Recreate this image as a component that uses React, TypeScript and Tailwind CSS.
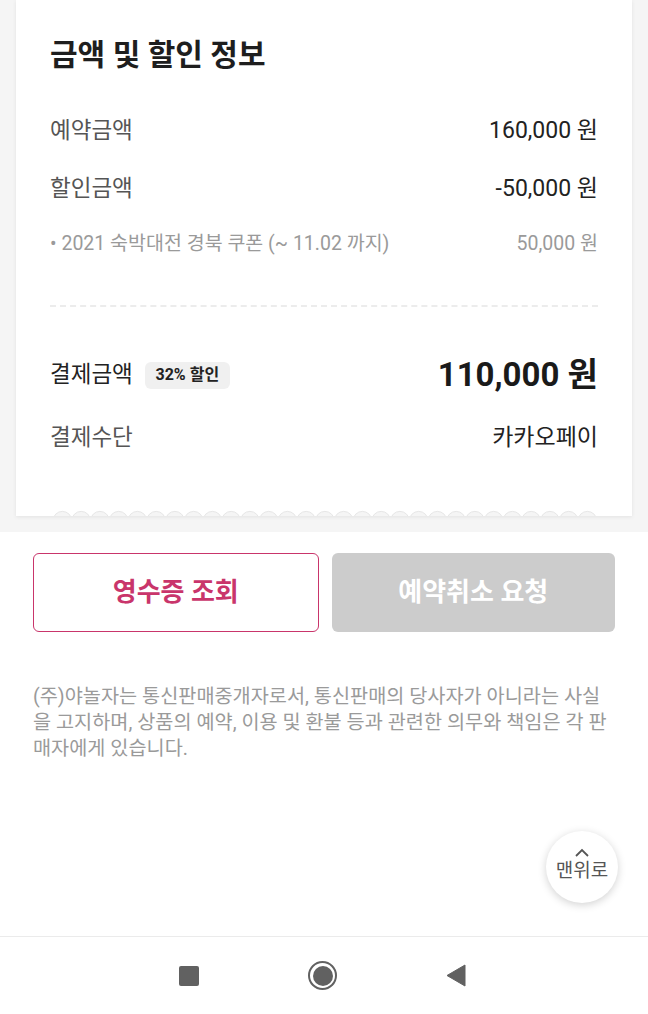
import { ReactNode } from "react";

const PINK = "#c9356b";

const Row = ({ label, value, h, labelClass, valueClass }: { label: ReactNode; value: ReactNode; h: string; labelClass?: string; valueClass?: string }) => (
  <div className={`flex items-center justify-between ${h}`}>
    <div className={labelClass}>{label}</div>
    <div className={valueClass}>{value}</div>
  </div>
);

const Scallop = () => (
  <svg width="543" height="8" viewBox="0 0 543 8" className="block">
    {Array.from({ length: 29 }).map((_, i) => (
      <circle key={i} cx={9.4 + i * 18.75} cy={12.8} r={9.4} fill="#f5f5f5" stroke="#e6e6e6" strokeWidth="1" />
    ))}
  </svg>
);

export default function App() {
  return (
    <div className="relative min-h-screen flex flex-col bg-white font-['Roboto','Noto_Sans_CJK_KR',sans-serif]">
      {/* 금액 카드 */}
      <div className="bg-[#f5f5f5] pb-4">
        <div className="mx-4 bg-white shadow-[0_1px_4px_rgba(0,0,0,0.08)]">
          <div className="px-[34px] pt-[35px] pb-[50px]">
            <h2 className="text-[30px] leading-[40px] font-bold text-[#1e1e1e]">금액 및 할인 정보</h2>
            <div className="mt-[27px]">
              <Row h="h-[58px]" label="예약금액" value="160,000 원" labelClass="text-[22.5px] text-[#555]" valueClass="text-[23px] text-[#222]" />
              <Row h="h-[58px]" label="할인금액" value="-50,000 원" labelClass="text-[22.5px] text-[#555]" valueClass="text-[23px] text-[#222]" />
              <Row h="h-[52px]" label="• 2021 숙박대전 경북 쿠폰 (~ 11.02 까지)" value="50,000 원" labelClass="text-[19.5px] text-[#9a9a9a]" valueClass="text-[19.5px] text-[#9a9a9a]" />
            </div>
            <div className="mt-[35px] border-t-2 border-dashed border-[#ececec]" />
            <div className="mt-[33px]">
              <Row
                h="h-[70px]"
                label={
                  <div className="flex items-center gap-[12px]">
                    <span className="text-[22.5px] text-[#222]">결제금액</span>
                    <span className="rounded-md bg-[#f0f0f0] w-[85px] justify-center h-[27px] flex items-center text-[16px] font-bold text-[#222]">32% 할인</span>
                  </div>
                }
                value="110,000 원"
                valueClass="text-[33px] font-bold text-[#1a1a1a]"
              />
              <Row h="h-[56px]" label="결제수단" value="카카오페이" labelClass="text-[22.5px] text-[#555]" valueClass="text-[23px] text-[#222]" />
            </div>
          </div>
          <div className="flex justify-center -mt-[8px]">
            <Scallop />
          </div>
        </div>
      </div>

      {/* 버튼 */}
      <div className="flex gap-[13px] px-[33px] pt-[21px]">
        <button className="flex-1 h-[79px] rounded-md border border-[#c9356b] bg-white text-[26px] font-bold" style={{ color: PINK }}>
          영수증 조회
        </button>
        <button className="flex-1 h-[79px] rounded-md bg-[#cccccc] text-[26px] font-bold text-white">예약취소 요청</button>
      </div>

      <p className="ml-[33px] mr-[38px] mt-[52px] text-[19.7px] leading-[26px] text-[#9a9a9a]">
        (주)야놀자는 통신판매중개자로서, 통신판매의 당사자가 아니라는 사실을 고지하며, 상품의 예약, 이용 및 환불 등과 관련한 의무와 책임은 각 판매자에게 있습니다.
      </p>

      <div className="flex-1" />

      {/* 맨위로 */}
      <button className="absolute right-[30px] bottom-[111px] w-[72px] h-[72px] rounded-full bg-white shadow-[0_2px_8px_rgba(0,0,0,0.18)] flex flex-col items-center justify-center">
        <svg width="16" height="10" viewBox="0 0 16 10" className="mb-[1px] -mt-[4px]">
          <path d="M2 8 L8 2 L14 8" fill="none" stroke="#555" strokeWidth="1.8" />
        </svg>
        <span className="text-[19px] leading-[24px] text-[#555]">맨위로</span>
      </button>

      {/* 내비게이션 바 */}
      <div className="h-[78px] border-t border-[#ebebeb] bg-white flex items-center">
        <div className="w-[189px] flex justify-end">
          <div className="w-[20px] h-[20px] rounded-[2px] bg-[#616161] mr-[-10px]" />
        </div>
        <div className="w-[134px] flex justify-end">
          <div className="w-[29px] h-[29px] rounded-full border-[2.5px] border-[#616161] flex items-center justify-center mr-[-14px]">
            <div className="w-[20px] h-[20px] rounded-full bg-[#616161]" />
          </div>
        </div>
        <div className="w-[133px] flex justify-end">
          <svg width="20" height="23" viewBox="0 0 20 23" className="mr-[-10px]">
            <path d="M19 1 L19 22 L1 11.5 Z" fill="#616161" strokeLinejoin="round" stroke="#616161" strokeWidth="1" />
          </svg>
        </div>
      </div>
    </div>
  );
}
